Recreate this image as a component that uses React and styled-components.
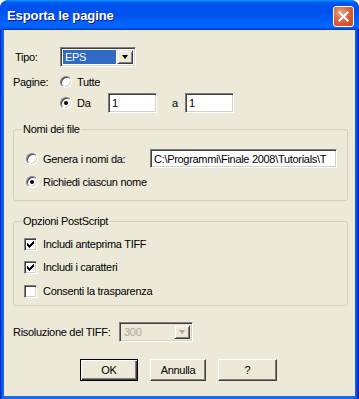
import React from 'react';
import styled, { createGlobalStyle } from 'styled-components';

const Global = createGlobalStyle`
  html, body { margin: 0; padding: 0; background: #ffffff; }
  body { font-family: "Liberation Sans", Arial, sans-serif; font-size: 11px; letter-spacing: -0.3px; color: #000; }
`;

const Window = styled.div`
  width: 359px;
  height: 399px;
  display: flex;
  flex-direction: column;
  border-radius: 8px 8px 0 0;
  overflow: hidden;
  background: linear-gradient(to right, #0019cf 0px, #0842d6 1px, #166aee 3px, #166aee 355px, #0842d6 357px, #0019cf 359px);
`;

const TitleBar = styled.div`
  height: 30px;
  flex: none;
  display: flex;
  align-items: center;
  justify-content: space-between;
  padding: 0 5px 0 7px;
  background: linear-gradient(to bottom, #0997ff 0%, #0053ee 10%, #0050ee 40%, #0066ff 85%, #0061ff 93%, #003dd7 97%, #003dd7 100%);
  border-radius: 8px 8px 0 0;
`;

const Title = styled.span`
  color: #fff;
  font-family: "Liberation Sans", Arial, sans-serif;
  font-weight: bold;
  font-size: 13px;
  letter-spacing: -0.1px;
  text-shadow: 1px 1px #0a1883;
  margin-top: 1px;
`;

const CloseButton = styled.div`
  width: 21px;
  height: 21px;
  box-sizing: border-box;
  border: 1px solid #fff;
  border-radius: 3px;
  background: radial-gradient(circle at 35% 30%, #f0a58a 0%, #e0613b 45%, #c8401c 100%);
  display: flex;
  align-items: center;
  justify-content: center;
  margin-top: 2px;
`;

const Body = styled.div`
  flex: 1;
  margin: 0 4px 3px 4px;
  background: #ece9d8;
  padding-left: 9px;
  display: flex;
  flex-direction: column;
`;

const Row = styled.div`
  display: flex;
  align-items: center;
  height: ${p => p.h || 16}px;
  margin-top: ${p => p.mt || 0}px;
  padding-left: ${p => p.pl || 0}px;
`;

const Label = styled.span`
  width: ${p => p.w}px;
  margin-left: ${p => p.ml || 0}px;
  flex: none;
  white-space: nowrap;
  color: ${p => (p.disabled ? '#aca899' : '#000')};
`;

const SelectBox = styled.div`
  width: ${p => p.w}px;
  height: 20px;
  box-sizing: border-box;
  border: 1px solid;
  border-color: #808080 #fff #fff #808080;
  box-shadow: inset 1px 1px #404040, inset -1px -1px #d4d0c8;
  background: ${p => (p.disabled ? '#ece9d8' : '#fff')};
  display: flex;
  padding: 2px;
  flex: none;
`;

const SelectValue = styled.div`
  flex: 1;
  display: flex;
  align-items: center;
  padding-left: 2px;
  background: ${p => (p.active ? '#316ac5' : 'transparent')};
  color: ${p => (p.active ? '#fff' : '#aca899')};
  margin-right: 1px;
`;

const DropButton = styled.div`
  width: 16px;
  box-sizing: border-box;
  border: 1px solid;
  border-color: #ece9d8 #404040 #404040 #ece9d8;
  box-shadow: inset 1px 1px #fff, inset -1px -1px #808080;
  background: #ece9d8;
  display: flex;
  align-items: center;
  justify-content: center;
`;

const Arrow = styled.div`
  width: 0;
  height: 0;
  border-left: 3.5px solid transparent;
  border-right: 3.5px solid transparent;
  border-top: 4px solid ${p => (p.disabled ? '#aca899' : '#000')};
`;

const Radio = styled.div`
  width: 12px;
  height: 12px;
  box-sizing: border-box;
  border-radius: 50%;
  border: 1px solid;
  border-color: #808080 #fff #fff #808080;
  box-shadow: inset 1px 1px #404040, inset -1px -1px #d4d0c8;
  background: #fff;
  flex: none;
  display: flex;
  align-items: center;
  justify-content: center;
  margin-right: ${p => p.gap || 5}px;
  &::after {
    content: '';
    width: 4px;
    height: 4px;
    border-radius: 50%;
    background: ${p => (p.checked ? '#000' : 'transparent')};
  }
`;

const CheckBox = styled.div`
  width: 13px;
  height: 13px;
  box-sizing: border-box;
  border: 1px solid;
  border-color: #808080 #fff #fff #808080;
  box-shadow: inset 1px 1px #404040, inset -1px -1px #d4d0c8;
  background: #fff;
  flex: none;
  display: flex;
  align-items: center;
  justify-content: center;
  margin-right: 6px;
`;

const TextInput = styled.div`
  width: ${p => p.w}px;
  height: ${p => p.h || 20}px;
  box-sizing: border-box;
  border: 1px solid;
  border-color: #808080 #fff #fff #808080;
  box-shadow: inset 1px 1px #404040, inset -1px -1px #d4d0c8;
  background: #fff;
  display: flex;
  align-items: center;
  padding-left: 3px;
  flex: none;
  white-space: nowrap;
  overflow: hidden;
`;

const Group = styled.div`
  position: relative;
  margin-top: ${p => p.mt}px;
  margin-right: 7px;
  height: ${p => p.h}px;
  box-sizing: border-box;
  border: 1px solid #d0d0bf;
  border-radius: 3px;
  padding-left: ${p => p.pl}px;
  padding-top: ${p => p.pt}px;
  display: flex;
  flex-direction: column;
`;

const Legend = styled.span`
  position: absolute;
  top: -7px;
  left: 8px;
  padding: 0 1px;
  background: #ece9d8;
  line-height: 13px;
`;

const ButtonRow = styled.div`
  display: flex;
  margin-top: 17px;
  padding-left: 67px;
  gap: 12px;
`;

const Button = styled.div`
  width: ${p => p.w || 57}px;
  height: 22px;
  box-sizing: border-box;
  border: 1px solid;
  border-color: ${p => (p.primary ? '#000' : '#fff #404040 #404040 #fff')};
  box-shadow: ${p =>
    p.primary
      ? 'inset 1px 1px #fff, inset -1px -1px #404040, inset -2px -2px #808080'
      : 'inset -1px -1px #808080'};
  background: #ece9d8;
  display: flex;
  align-items: center;
  justify-content: center;
`;

const Check = () => (
  <svg width="7" height="7" viewBox="0 0 7 7" shapeRendering="crispEdges">
    <rect x="6" y="0" width="1" height="1" />
    <rect x="5" y="1" width="2" height="1" />
    <rect x="0" y="2" width="1" height="1" />
    <rect x="4" y="2" width="3" height="1" />
    <rect x="0" y="3" width="2" height="1" />
    <rect x="3" y="3" width="3" height="1" />
    <rect x="0" y="4" width="5" height="1" />
    <rect x="1" y="5" width="3" height="1" />
    <rect x="2" y="6" width="1" height="1" />
  </svg>
);

const CloseX = () => (
  <svg width="11" height="11" viewBox="0 0 11 11">
    <path d="M1.5 1.5 L9.5 9.5 M9.5 1.5 L1.5 9.5" stroke="#fff" strokeWidth="2.2" strokeLinecap="square" />
  </svg>
);

export default function App() {
  return (
    <>
      <Global />
      <Window>
        <TitleBar>
          <Title>Esporta le pagine</Title>
          <CloseButton><CloseX /></CloseButton>
        </TitleBar>
        <Body>
          <Row h={20} mt={17}>
            <Label w={45} ml={2}>Tipo:</Label>
            <SelectBox w={76}>
              <SelectValue active>EPS</SelectValue>
              <DropButton><Arrow /></DropButton>
            </SelectBox>
          </Row>

          <Row mt={7}>
            <Label w={47}>Pagine:</Label>
            <Radio />
            <span>Tutte</span>
          </Row>

          <Row h={20} mt={3} pl={47}>
            <Radio checked />
            <Label w={31}>Da</Label>
            <TextInput w={49}>1</TextInput>
            <Label w={13} ml={15}>a</Label>
            <TextInput w={49}>1</TextInput>
          </Row>

          <Group mt={16} h={72} pl={12} pt={19}>
            <Legend>Nomi dei file</Legend>
            <Row h={19}>
              <Radio />
              <Label w={107}>Genera i nomi da:</Label>
              <TextInput w={187} h={19}>C:\Programmi\Finale 2008\Tutorials\T</TextInput>
            </Row>
            <Row mt={6}>
              <Radio checked />
              <span>Richiedi ciascun nome</span>
            </Row>
          </Group>

          <Group mt={20} h={85} pl={10} pt={14}>
            <Legend>Opzioni PostScript</Legend>
            <Row>
              <CheckBox><Check /></CheckBox>
              <span>Includi anteprima TIFF</span>
            </Row>
            <Row mt={7}>
              <CheckBox><Check /></CheckBox>
              <span>Includi i caratteri</span>
            </Row>
            <Row mt={8}>
              <CheckBox />
              <span>Consenti la trasparenza</span>
            </Row>
          </Group>

          <Row h={20} mt={16}>
            <Label w={106}>Risoluzione del TIFF:</Label>
            <SelectBox w={74} disabled>
              <SelectValue>300</SelectValue>
              <DropButton><Arrow disabled /></DropButton>
            </SelectBox>
          </Row>

          <ButtonRow>
            <Button primary w={58}>OK</Button>
            <Button w={56}>Annulla</Button>
            <Button w={59}>?</Button>
          </ButtonRow>
        </Body>
      </Window>
    </>
  );
}
